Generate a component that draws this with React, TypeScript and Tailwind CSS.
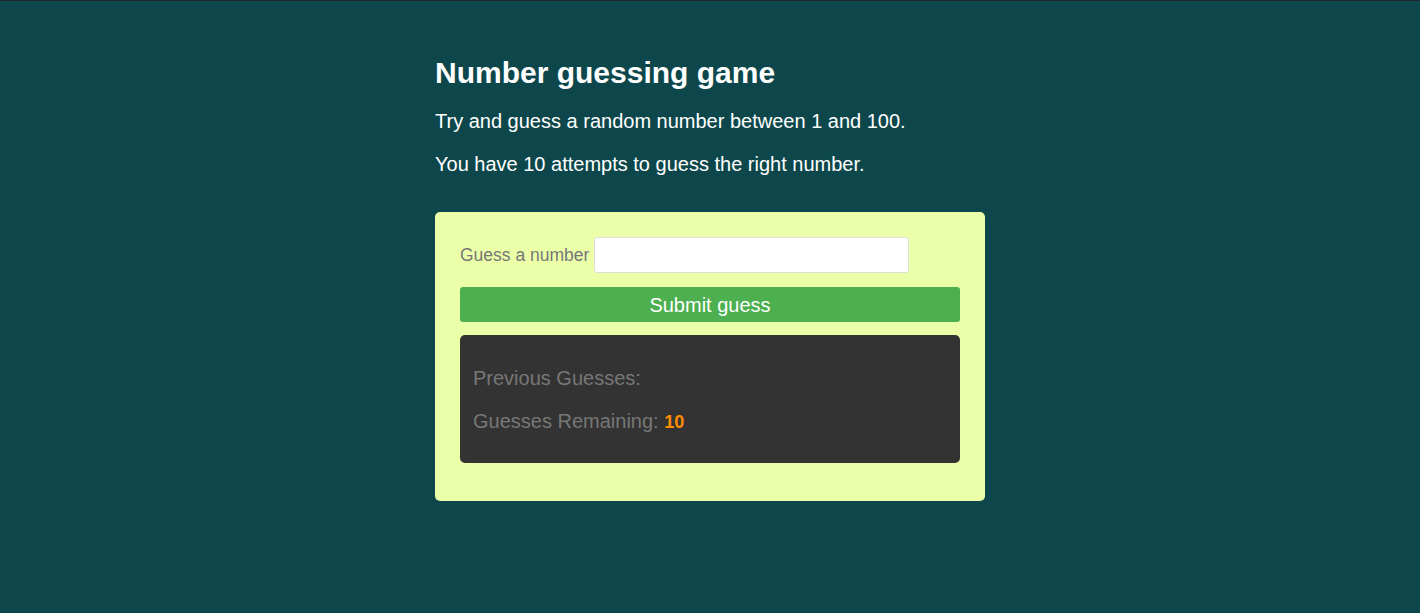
import React, { useState } from "react";

export default function App() {
  const [guess, setGuess] = useState("");
  const [guesses] = useState<number[]>([]);

  return (
    <div className="min-h-[613px] bg-[#0d474b] border-t border-[#22262e] font-['Liberation_Sans',Arial,sans-serif]">
      <div className="w-[550px] mx-auto pt-[55px]">
        <h1 className="text-[30px] font-bold text-white leading-[34px]">Number guessing game</h1>
        <p className="text-[20px] text-white mt-[19px] leading-[24px]">
          Try and guess a random number between 1 and 100.
        </p>
        <p className="text-[20px] text-white mt-[19px] leading-[24px]">
          You have 10 attempts to guess the right number.
        </p>

        <div className="mt-[36px] bg-[#ebffa8] rounded-[5px] px-[25px] pt-[25px] pb-[38px]">
          <div className="flex items-center">
            <label className="text-[17.5px] text-[#777] mr-[5px] pt-[1px]">Guess a number</label>
            <input
              type="number"
              value={guess}
              onChange={(e) => setGuess(e.target.value)}
              className="w-[315px] h-[36px] bg-white border border-[#ddd] rounded-[3px] px-2 outline-none"
            />
          </div>
          <button className="mt-[14px] w-full h-[35px] bg-[#4caf50] text-white text-[20px] rounded-[3px]">
            Submit guess
          </button>
          <div className="mt-[13px] bg-[#333] rounded-[5px] px-[13px] pt-[31px] pb-[29px] text-[20px] text-[#777]">
            <p className="leading-[24px]">Previous Guesses: {guesses.join(", ")}</p>
            <p className="leading-[24px] mt-[19px]">
              Guesses Remaining: <span className="text-[#ff8c00] font-bold text-[18px]">10</span>
            </p>
          </div>
        </div>
      </div>
    </div>
  );
}
